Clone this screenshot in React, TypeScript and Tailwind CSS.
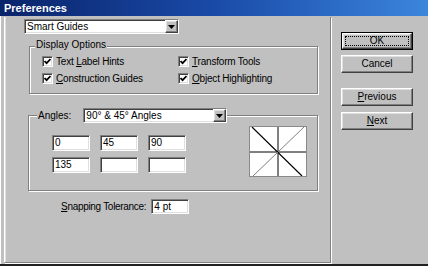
import React from "react";

const sunken =
  "bg-white border border-t-[#808080] border-l-[#808080] border-b-white border-r-white shadow-[inset_1px_1px_0_#404040,inset_-1px_-1px_0_#dfdfdf]";
const raised =
  "border border-t-white border-l-white border-b-[#404040] border-r-[#404040] shadow-[inset_-1px_-1px_0_#808080,inset_1px_1px_0_#dfdfdf]";
const etched =
  "border border-[#808080] shadow-[1px_1px_0_#ffffff,inset_1px_1px_0_#ffffff]";

function Check() {
  return (
    <div className={`w-[11px] h-[11px] ${sunken} flex items-center justify-center shrink-0`}>
      <svg width="7" height="7" viewBox="0 0 7 7">
        <path d="M0.5 3 L2.6 5.2 L6.5 1" stroke="#000" strokeWidth="1.8" fill="none" />
      </svg>
    </div>
  );
}

function CheckRow({ children }: { children: React.ReactNode }) {
  return (
    <div className="flex items-center gap-[3px] h-[11px]">
      <Check />
      <span className="leading-none whitespace-nowrap tracking-[-0.2px]">{children}</span>
    </div>
  );
}

function Dropdown({ label, w }: { label: string; w: string }) {
  return (
    <div className={`${w} h-[15px] ${sunken} flex items-center`}>
      <span className="flex-1 pl-[2px] leading-none whitespace-nowrap">{label}</span>
      <div className={`w-[13px] h-[13px] bg-[#c0c0c0] ${raised} flex items-center justify-center`}>
        <svg width="7" height="4" viewBox="0 0 7 4">
          <path d="M0 0 H7 L3.5 4 Z" fill="#000" />
        </svg>
      </div>
    </div>
  );
}

function Field({ v, h = "h-[16px]" }: { v?: string; h?: string }) {
  return (
    <div className={`w-[38px] ${h} ${sunken} flex items-center pl-[2px] leading-none`}>
      {v}
    </div>
  );
}

function Btn({ children, def }: { children: React.ReactNode; def?: boolean }) {
  if (def) {
    return (
      <div className="w-[72px] h-[18px] border border-black">
        <div className={`w-full h-full bg-[#c0c0c0] ${raised} flex items-center justify-center p-[2px]`}>
          <div className="w-full h-full border border-dotted border-black flex items-center justify-center leading-none">
            {children}
          </div>
        </div>
      </div>
    );
  }
  return (
    <div className={`w-[72px] h-[18px] bg-[#c0c0c0] ${raised} flex items-center justify-center leading-none`}>
      {children}
    </div>
  );
}

export default function App() {
  return (
    <div className="w-[428px] h-[266px] bg-[#c0c0c0] overflow-hidden flex flex-col font-['Liberation_Sans',Arial,sans-serif] text-[10px] text-black border-b-2 border-b-[#202020]">
      <div className="h-[16px] shrink-0 bg-gradient-to-r from-[#0a246a] via-[#1a4aa8] to-[#3c86dc] flex items-center pl-[4px]">
        <span className="text-white font-bold text-[11px] leading-none">Preferences</span>
      </div>
      <div className="flex flex-1 pl-[1px] border-l border-l-white">
        <div className="w-[327px] h-[246px] ml-[2px] mt-[1px] border-l border-l-white border-r border-r-[#808080] border-b border-b-[#808080] shadow-[1px_1px_0_#ffffff,inset_1px_0_0_#dfdfdf] flex flex-col">
          <div className="ml-[19px] mt-[2px]">
            <Dropdown label="Smart Guides" w="w-[155px]" />
          </div>

          <div className={`relative ml-[24px] mt-[12px] w-[289px] h-[48px] ${etched}`}>
            <div className="absolute left-[5px] top-[-7px] bg-[#c0c0c0] px-[1px] leading-none">
              Display Options
            </div>
            <div className="grid grid-cols-[136px_auto] gap-y-[6px] pl-[12px] pt-[9px]">
              <CheckRow>
                Text <u>L</u>abel Hints
              </CheckRow>
              <CheckRow>
                <u>T</u>ransform Tools
              </CheckRow>
              <CheckRow>
                <u>C</u>onstruction Guides
              </CheckRow>
              <CheckRow>
                <u>O</u>bject Highlighting
              </CheckRow>
            </div>
          </div>

          <div className={`relative ml-[23px] mt-[21px] w-[290px] h-[76px] ${etched} flex`}>
            <div className="absolute left-[8px] top-[-8px] flex items-center gap-[5px] bg-[#c0c0c0] pl-[1px]">
              <span className="leading-none pr-[7px]">Angles:</span>
              <Dropdown label="90° & 45° Angles" w="w-[144px]" />
            </div>
            <div className="grid grid-cols-[38px_38px_38px] gap-x-[10px] gap-y-[6px] ml-[23px] mt-[19px] h-min">
              <Field v="0" />
              <Field v="45" />
              <Field v="90" />
              <Field v="135" />
              <Field />
              <Field />
            </div>
            <div className="ml-[63px] mt-[10px] w-[58px] h-[51px] bg-white border border-[#8a8a8a]">
              <svg width="56" height="49" viewBox="0 0 56 49">
                <line x1="28" y1="0" x2="28" y2="49" stroke="#000" strokeWidth="1" />
                <line x1="0" y1="25" x2="56" y2="25" stroke="#000" strokeWidth="1" />
                <line x1="2" y1="0" x2="52" y2="49" stroke="#000" strokeWidth="1.2" />
                <line x1="54" y1="0" x2="3" y2="49" stroke="#808080" strokeWidth="1" />
              </svg>
            </div>
          </div>

          <div className="flex items-center ml-[56px] mt-[8px] gap-[5px]">
            <span className="leading-none whitespace-nowrap tracking-[-0.3px]">
              <u>S</u>napping Tolerance:
            </span>
            <Field v="4 pt" h="h-[15px]" />
          </div>
        </div>

        <div className="flex flex-col ml-[10px] mt-[16px]">
          <Btn def>OK</Btn>
          <div className="mt-[5px]">
            <Btn>Cancel</Btn>
          </div>
          <div className="mt-[15px]">
            <Btn>
              <span>
                <u>P</u>revious
              </span>
            </Btn>
          </div>
          <div className="mt-[6px]">
            <Btn>
              <span>
                <u>N</u>ext
              </span>
            </Btn>
          </div>
        </div>
      </div>
    </div>
  );
}
